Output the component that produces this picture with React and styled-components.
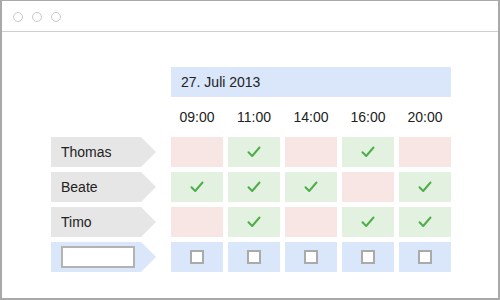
import React from "react";
import styled, { createGlobalStyle } from "styled-components";

const Global = createGlobalStyle`
  html, body { margin: 0; padding: 0; background: #fff; }
  body { font-family: "Liberation Sans", Arial, sans-serif; }
`;

const Frame = styled.div`
  box-sizing: border-box;
  width: 500px;
  height: 300px;
  border: 2px solid #a9a9a9;
  border-top-width: 1px;
  display: flex;
  flex-direction: column;
  background: #fff;
`;

const TitleBar = styled.div`
  height: 31px;
  border-bottom: 1px solid #cfcfcf;
  display: flex;
  align-items: center;
  gap: 9px;
  padding: 2px 0 0 11px;
  box-sizing: border-box;
`;

const Dot = styled.span`
  width: 10px;
  height: 10px;
  border-radius: 50%;
  border: 1px solid #c9c9c9;
  box-sizing: border-box;
`;

const Body = styled.div`
  padding: 35px 0 0 49px;
`;

const Grid = styled.div`
  display: grid;
  grid-template-columns: 115px repeat(5, 52px);
  grid-template-rows: 30px 30px repeat(4, 30px);
  gap: 5px;
`;

const DateBar = styled.div`
  grid-column: 2 / span 5;
  background: #dae6f9;
  display: flex;
  align-items: center;
  padding-left: 10px;
  font-size: 14px;
  color: #222;
`;

const Time = styled.div`
  display: flex;
  align-items: center;
  justify-content: center;
  font-size: 14px;
  color: #222;
`;

const Label = styled.div`
  width: 105px;
  background: ${(p) => (p.$blue ? "#dae6f9" : "#e6e6e6")};
  clip-path: polygon(0 0, 90px 0, 105px 50%, 90px 100%, 0 100%);
  display: flex;
  align-items: center;
  padding-left: ${(p) => (p.$blue ? "10px" : "10px")};
  box-sizing: border-box;
  font-size: 14px;
  color: #222;
`;

const NameInput = styled.div`
  width: 74px;
  height: 22px;
  box-sizing: border-box;
  border: 2px solid #b3b3b3;
  background: #fff;
`;

const colors = { y: "#e3f1e1", n: "#f8e6e5", b: "#dae6f9" };

const Cell = styled.div`
  background: ${(p) => colors[p.$k]};
  display: flex;
  align-items: center;
  justify-content: center;
`;

const Box = styled.span`
  width: 14px;
  height: 14px;
  box-sizing: border-box;
  border: 2px solid #aaaaaa;
  background: #fff;
`;

const Check = () => (
  <svg width="14" height="12" viewBox="0 0 14 12">
    <path d="M1.5 6.2 L5.2 10 L12.5 1.5" fill="none" stroke="#4fae4a" strokeWidth="2" strokeLinecap="round" strokeLinejoin="round" />
  </svg>
);

const times = ["09:00", "11:00", "14:00", "16:00", "20:00"];
const people = [
  ["Thomas", "nynyn"],
  ["Beate", "yyyny"],
  ["Timo", "nynyy"],
];

export default function App() {
  return (
    <>
      <Global />
      <Frame>
        <TitleBar>
          <Dot />
          <Dot />
          <Dot />
        </TitleBar>
        <Body>
          <Grid>
            <div />
            <DateBar>27. Juli 2013</DateBar>
            <div />
            {times.map((t) => (
              <Time key={t}>{t}</Time>
            ))}
            {people.map(([name, v]) => (
              <React.Fragment key={name}>
                <Label>{name}</Label>
                {v.split("").map((k, i) => (
                  <Cell key={i} $k={k}>
                    {k === "y" && <Check />}
                  </Cell>
                ))}
              </React.Fragment>
            ))}
            <Label $blue>
              <NameInput />
            </Label>
            {times.map((t) => (
              <Cell key={t} $k="b">
                <Box />
              </Cell>
            ))}
          </Grid>
        </Body>
      </Frame>
    </>
  );
}
